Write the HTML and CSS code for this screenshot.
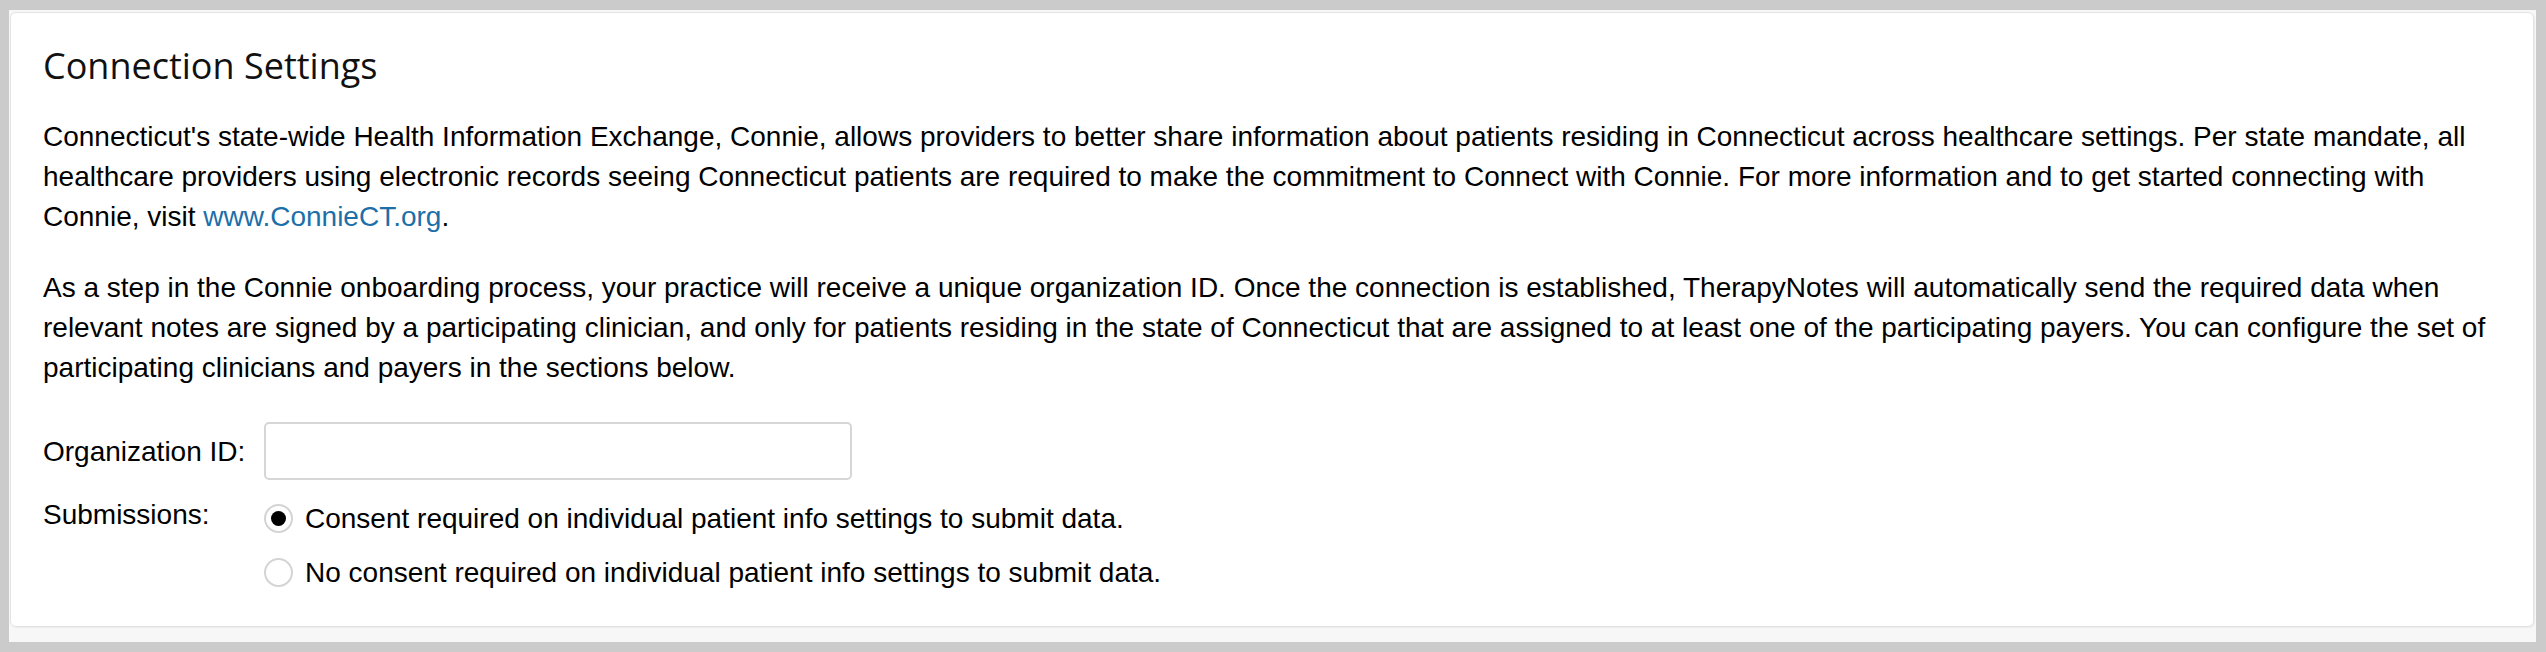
FILE: index.html
```html
<!DOCTYPE html>
<html lang="en">
<head>
<meta charset="utf-8">
<title>Connection Settings</title>
<link rel="stylesheet" href="styles.css">
</head>
<body>
<div class="frame">
  <section class="card">
    <h1 class="title">Connection Settings</h1>
    <p class="para">Connecticut's state-wide Health Information Exchange, Connie, allows providers to better share information about patients residing in Connecticut across healthcare settings. Per state mandate, all healthcare providers using electronic records seeing Connecticut patients are required to make the commitment to Connect with Connie. For more information and to get started connecting with Connie, visit <a class="link" href="#">www.ConnieCT.org</a>.</p>
    <p class="para">As a step in the Connie onboarding process, your practice will receive a unique organization ID. Once the connection is established, TherapyNotes will automatically send the required data when relevant notes are signed by a participating clinician, and only for patients residing in the state of Connecticut that are assigned to at least one of the participating payers. You can configure the set of participating clinicians and payers in the sections below.</p>
    <div class="form">
      <label class="label label-mid" for="org">Organization ID:</label>
      <input class="textbox" id="org" type="text">
      <div class="label label-top">Submissions:</div>
      <div class="radios">
        <label class="radio-row"><input class="radio" type="radio" name="sub" checked><span>Consent required on individual patient info settings to submit data.</span></label>
        <label class="radio-row"><input class="radio" type="radio" name="sub"><span>No consent required on individual patient info settings to submit data.</span></label>
      </div>
    </div>
  </section>
</div>
</body>
</html>
```

FILE: styles.css
```css
html, body {
  margin: 0;
  padding: 0;
}
body {
  background: #cbcbcb;
  padding: 10px 10px 10px 9px;
  font-family: "Liberation Sans", Arial, sans-serif;
  color: #000;
}
.frame {
  background: #f7f7f7;
  padding: 2px 2px 15px 1px;
}
.card {
  background: #fff;
  border: 1px solid #e3e3e3;
  border-radius: 6px;
  box-shadow: 1px 1px 0 #ececec;
  padding: 30px 40px 34px 32px;
}
.title {
  margin: 0 0 28px 0;
  font-family: "Open Sans", "Noto Sans", sans-serif;
  font-weight: 400;
  font-size: 36px;
  line-height: 46px;
  color: #111;
}
.para {
  margin: 0 0 31px 0;
  font-size: 28px;
  line-height: 40px;
}
.para + .para {
  margin-bottom: 34px;
}
.link {
  color: #1c6fa8;
  text-decoration: none;
}
.form {
  display: grid;
  grid-template-columns: 221px auto;
  row-gap: 15px;
  justify-content: start;
  font-size: 28px;
  line-height: 39px;
}
.label-mid {
  align-self: center;
}
.label-top {
  align-self: start;
}
.textbox {
  box-sizing: border-box;
  width: 588px;
  height: 58px;
  border: 2px solid #d6d6d6;
  border-radius: 5px;
  background: #fff;
  padding: 0 12px;
  font: inherit;
  margin: 0;
}
.radios {
  display: flex;
  flex-direction: column;
  gap: 15px;
  padding-top: 4px;
}
.radio-row {
  display: flex;
  align-items: center;
  gap: 12px;
}
.radio {
  appearance: none;
  -webkit-appearance: none;
  box-sizing: border-box;
  width: 29px;
  height: 29px;
  margin: 0;
  border: 2px solid #d4d4d4;
  border-radius: 50%;
  background: #fff;
  display: grid;
  place-items: center;
  flex: none;
}
.radio:checked::before {
  content: "";
  width: 15px;
  height: 15px;
  border-radius: 50%;
  background: #000;
}
```
